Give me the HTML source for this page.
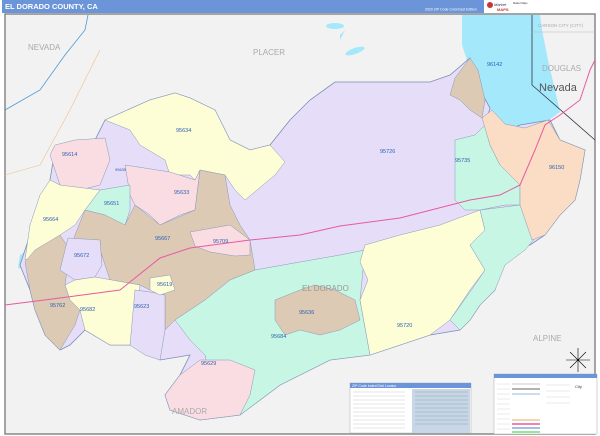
<!DOCTYPE html>
<html><head><meta charset="utf-8"><style>
html,body{margin:0;padding:0;width:600px;height:436px;overflow:hidden;background:#fff;font-family:"Liberation Sans",sans-serif}
</style></head><body>
<svg width="600" height="436" viewBox="0 0 600 436" xmlns="http://www.w3.org/2000/svg" font-family="Liberation Sans, sans-serif">
<rect x="0" y="0" width="600" height="436" fill="#fff"/>
<rect x="2" y="0" width="482" height="13" fill="#6b95d8"/>
<text x="5" y="9" font-size="7.5" font-weight="bold" fill="#fff">EL DORADO COUNTY, CA</text>
<text x="425" y="10.5" font-size="3.5" fill="#fff">2020 ZIP Code ColorCast Edition</text>
<rect x="484" y="1" width="30" height="11" fill="#fff"/>
<circle cx="490" cy="5" r="3" fill="#c33"/>
<text x="494" y="6" font-size="4" fill="#335" font-style="italic">Market</text>
<text x="497" y="11" font-size="4" fill="#c33" font-weight="bold">MAPS</text>
<text x="513" y="4" font-size="2.5" fill="#333">Market Maps</text>
<rect x="5" y="14" width="590" height="420" fill="#f2f2f2" stroke="#888" stroke-width="1.5"/>
<!-- lakes background -->
<path d="M462 15 L540 15 L542 30 L548 60 L555 90 L560 112 L545 123 L525 128 L505 124 L492 112 L482 100 L472 75 L462 45 Z" fill="#a3e8fb"/>
<path d="M20 255 L35 245 L40 262 L30 270 L18 268 Z" fill="#a3e8fb"/>
<path d="M340 40 L345 30 L340 35 Z" fill="#a3e8fb"/>
<ellipse cx="335" cy="26" rx="9" ry="3" fill="#a3e8fb"/>
<ellipse cx="355" cy="51" rx="10" ry="3" fill="#a3e8fb" transform="rotate(-20 355 51)"/>
<!-- county base lavender -->
<path d="M20 265 L25 250 L45 190 L50 180 L55 150 L95 140 L105 120 L150 100 L175 93 L190 98 L215 110 L230 140 L250 150 L270 145 L290 120 L310 100 L335 82 L430 82 L450 75 L470 58 L480 90 L490 108 L485 125 L495 135 L520 125 L550 120 L560 140 L585 150 L580 180 L575 200 L560 215 L545 235 L530 245 L515 250 L500 270 L495 290 L480 305 L470 320 L460 330 L430 335 L400 345 L370 355 L330 360 L300 375 L280 385 L260 400 L240 415 L200 420 L170 410 L165 395 L180 375 L190 355 L160 360 L145 350 L130 345 L110 345 L85 330 L70 345 L60 350 L45 335 L35 310 L30 290 Z" fill="#e6ddf8" stroke="#7a8fb0" stroke-width="0.8"/>
<g stroke="#8899b8" stroke-width="0.5">
<path d="M105 120 L150 100 L175 93 L190 98 L215 110 L230 140 L250 150 L270 145 L285 162 L275 175 L245 200 L235 190 L225 175 L200 170 L195 180 L190 175 L170 175 L165 160 L140 145 L130 130 Z" fill="#fdfdd6"/>
<path d="M50 155 L55 145 L75 140 L105 138 L110 160 L100 185 L80 190 L60 185 L55 170 Z" fill="#f9dde2"/>
<path d="M125 165 L170 172 L195 180 L200 170 L195 210 L180 215 L160 225 L150 215 L135 205 L130 195 Z" fill="#f9dde2"/>
<path d="M100 190 L130 185 L130 210 L125 225 L110 225 L105 215 L85 210 Z" fill="#c8f6e4"/>
<path d="M40 195 L50 180 L60 185 L100 190 L85 210 L75 225 L60 235 L40 255 L25 260 L30 225 Z" fill="#fdfdd6"/>
<path d="M75 235 L85 210 L105 215 L125 225 L135 205 L160 225 L195 210 L200 170 L225 175 L230 205 L240 225 L250 240 L255 270 L230 280 L205 300 L175 320 L165 330 L165 295 L150 290 L140 285 L110 280 L100 250 L70 250 Z" fill="#dccab5"/>
<path d="M25 262 L35 250 L60 235 L70 250 L65 285 L70 300 L80 310 L75 325 L60 350 L45 335 L35 310 L30 290 Z" fill="#dccab5"/>
<path d="M68 238 L100 240 L102 265 L95 277 L75 280 L60 270 Z" fill="#e6ddf8"/>
<path d="M65 285 L75 280 L95 277 L140 285 L135 330 L130 345 L110 345 L85 330 L80 310 L70 300 Z" fill="#fdfdd6"/>
<path d="M135 290 L150 292 L165 295 L165 330 L160 360 L145 355 L130 345 Z" fill="#e6ddf8"/>
<path d="M150 278 L170 275 L175 290 L160 295 L150 290 Z" fill="#fdfdd6"/>
<path d="M190 232 L230 225 L250 240 L250 255 L235 256 L210 252 L195 246 Z" fill="#f9dde2"/>
<path d="M205 300 L230 280 L255 270 L300 262 L340 255 L365 250 L360 300 L370 355 L330 360 L300 375 L280 385 L260 400 L240 415 L215 405 L205 355 L190 340 L175 320 Z" fill="#c8f6e4"/>
<path d="M365 245 L400 235 L440 225 L480 210 L485 230 L470 245 L485 270 L470 290 L460 305 L450 320 L430 335 L400 345 L370 355 L360 300 L368 280 L360 262 Z" fill="#fdfdd6"/>
<path d="M480 210 L520 205 L540 232 L525 250 L505 265 L495 290 L480 305 L470 320 L460 330 L450 320 L470 292 L485 270 L470 245 L485 230 Z" fill="#c8f6e4"/>
<path d="M455 140 L475 135 L485 125 L490 145 L500 165 L520 185 L520 205 L505 205 L480 210 L465 210 L455 200 Z" fill="#c8f6e4"/>
<path d="M275 300 L300 290 L315 285 L335 290 L355 300 L360 320 L340 330 L320 335 L300 330 L285 335 L275 320 Z" fill="#dccab5"/>
<path d="M180 375 L200 360 L230 360 L255 370 L250 395 L240 415 L200 420 L170 410 L165 395 Z" fill="#f9dde2"/>
<path d="M482 118 L492 110 L505 124 L525 128 L548 120 L560 140 L585 150 L580 180 L575 200 L560 215 L545 235 L532 240 L520 205 L520 185 L500 165 L490 145 Z" fill="#fbdcc5"/>
<path d="M455 78 L470 58 L478 70 L485 100 L482 118 L470 110 L460 100 L450 95 Z" fill="#dccab5"/>
</g>
<!-- Nevada line -->
<path d="M532 15 L532 85 L595 140" fill="none" stroke="#334" stroke-width="0.8"/>
<path d="M532 32 L595 32" stroke="#bbb" stroke-width="0.5"/>
<!-- highways -->
<path d="M5 305 L60 298 L120 290 L160 258 L190 248 L250 240 L300 235 L340 226 L400 218 L470 200 L500 195 L520 185 L535 150 L545 125 L560 115 L580 100 L590 70 L595 60" fill="none" stroke="#e85aa0" stroke-width="1"/>
<path d="M5 110 L40 90 L65 55 L85 30 L88 15" fill="none" stroke="#4a9ad8" stroke-width="0.8"/>
<path d="M5 175 L40 165 L70 110 L100 50" fill="none" stroke="#f0c08a" stroke-width="0.6"/>
<!-- labels -->
<g font-size="8" fill="#aaa">
<text x="28" y="50">NEVADA</text><text x="253" y="55">PLACER</text>
<text x="542" y="71">DOUGLAS</text>
<text x="302" y="291" fill="#999">EL DORADO</text>
<text x="533" y="341">ALPINE</text><text x="172" y="414">AMADOR</text>
</g>
<text x="539" y="91" font-size="11" fill="#555">Nevada</text>
<text x="538" y="27" font-size="4.5" fill="#aaa">CARSON CITY (CITY)</text>
<g font-size="5.5" fill="#3060b0">
<text x="176" y="132">95634</text><text x="62" y="156">95614</text><text x="115" y="171" font-size="4">95635</text>
<text x="174" y="194">95633</text><text x="104" y="205">95651</text><text x="43" y="221">95664</text>
<text x="155" y="240">95667</text><text x="213" y="243">95709</text><text x="74" y="257">95672</text>
<text x="157" y="286">95619</text><text x="50" y="307">95762</text><text x="80" y="311">95682</text>
<text x="134" y="308">95623</text><text x="271" y="338">95684</text><text x="299" y="314">95636</text>
<text x="397" y="327">95720</text><text x="380" y="153">95726</text><text x="455" y="162">95735</text>
<text x="549" y="169">96150</text><text x="487" y="66">96142</text><text x="201" y="365">95629</text>
</g>
<!-- compass -->
<g stroke="#000" stroke-width="0.6"><path d="M578 348 L578 372 M566 360 L590 360 M570 352 L586 368 M586 352 L570 368"/></g>
<!-- legend table -->
<rect x="350" y="383" width="121" height="50" fill="#fff" stroke="#aaa" stroke-width="0.5"/>
<rect x="350" y="383" width="121" height="5" fill="#6b95d8"/>
<text x="352" y="387" font-size="3.5" fill="#fff">ZIP Code Index/Grid Locator</text>
<rect x="412" y="389" width="58" height="44" fill="#c9d6e8"/>
<g stroke="#ccc" stroke-width="0.6">
<path d="M353 392H405M353 396H405M353 400H405M353 404H405M353 408H405M353 412H405M353 416H405M353 420H405M353 424H405M353 428H405"/>
<path d="M415 392H468M415 396H468M415 400H468M415 404H468M415 408H468M415 412H468M415 416H468M415 420H468M415 424H468" stroke="#8aa"/>
</g>
<!-- right legend -->
<rect x="494" y="374" width="103" height="60" fill="#fff" stroke="#aaa" stroke-width="0.5"/>
<rect x="494" y="374" width="103" height="4" fill="#6b95d8"/>
<g stroke-width="1">
<path d="M512 384H540" stroke="#ccc"/><path d="M512 389H540" stroke="#999" stroke-width="1.5"/>
<path d="M512 394H540" stroke="#9bd"/><path d="M512 420H540" stroke="#f0c890" stroke-width="1.5"/>
<path d="M512 424H540" stroke="#e85aa0" stroke-width="1.5"/><path d="M512 428H540" stroke="#88aadd" stroke-width="1.5"/>
<path d="M512 432H540" stroke="#7d7" stroke-width="1.5"/>
</g>
<g stroke="#ccc" stroke-width="0.4"><path d="M497 384H510M497 389H510M497 394H510M497 399H510M497 404H510M497 409H510M497 414H510M497 419H510M497 424H510M497 429H510M546 385H570M546 391H570M546 397H570M546 403H570"/></g>
<text x="575" y="388" font-size="4" fill="#333">City</text>
</svg>
</body></html>
